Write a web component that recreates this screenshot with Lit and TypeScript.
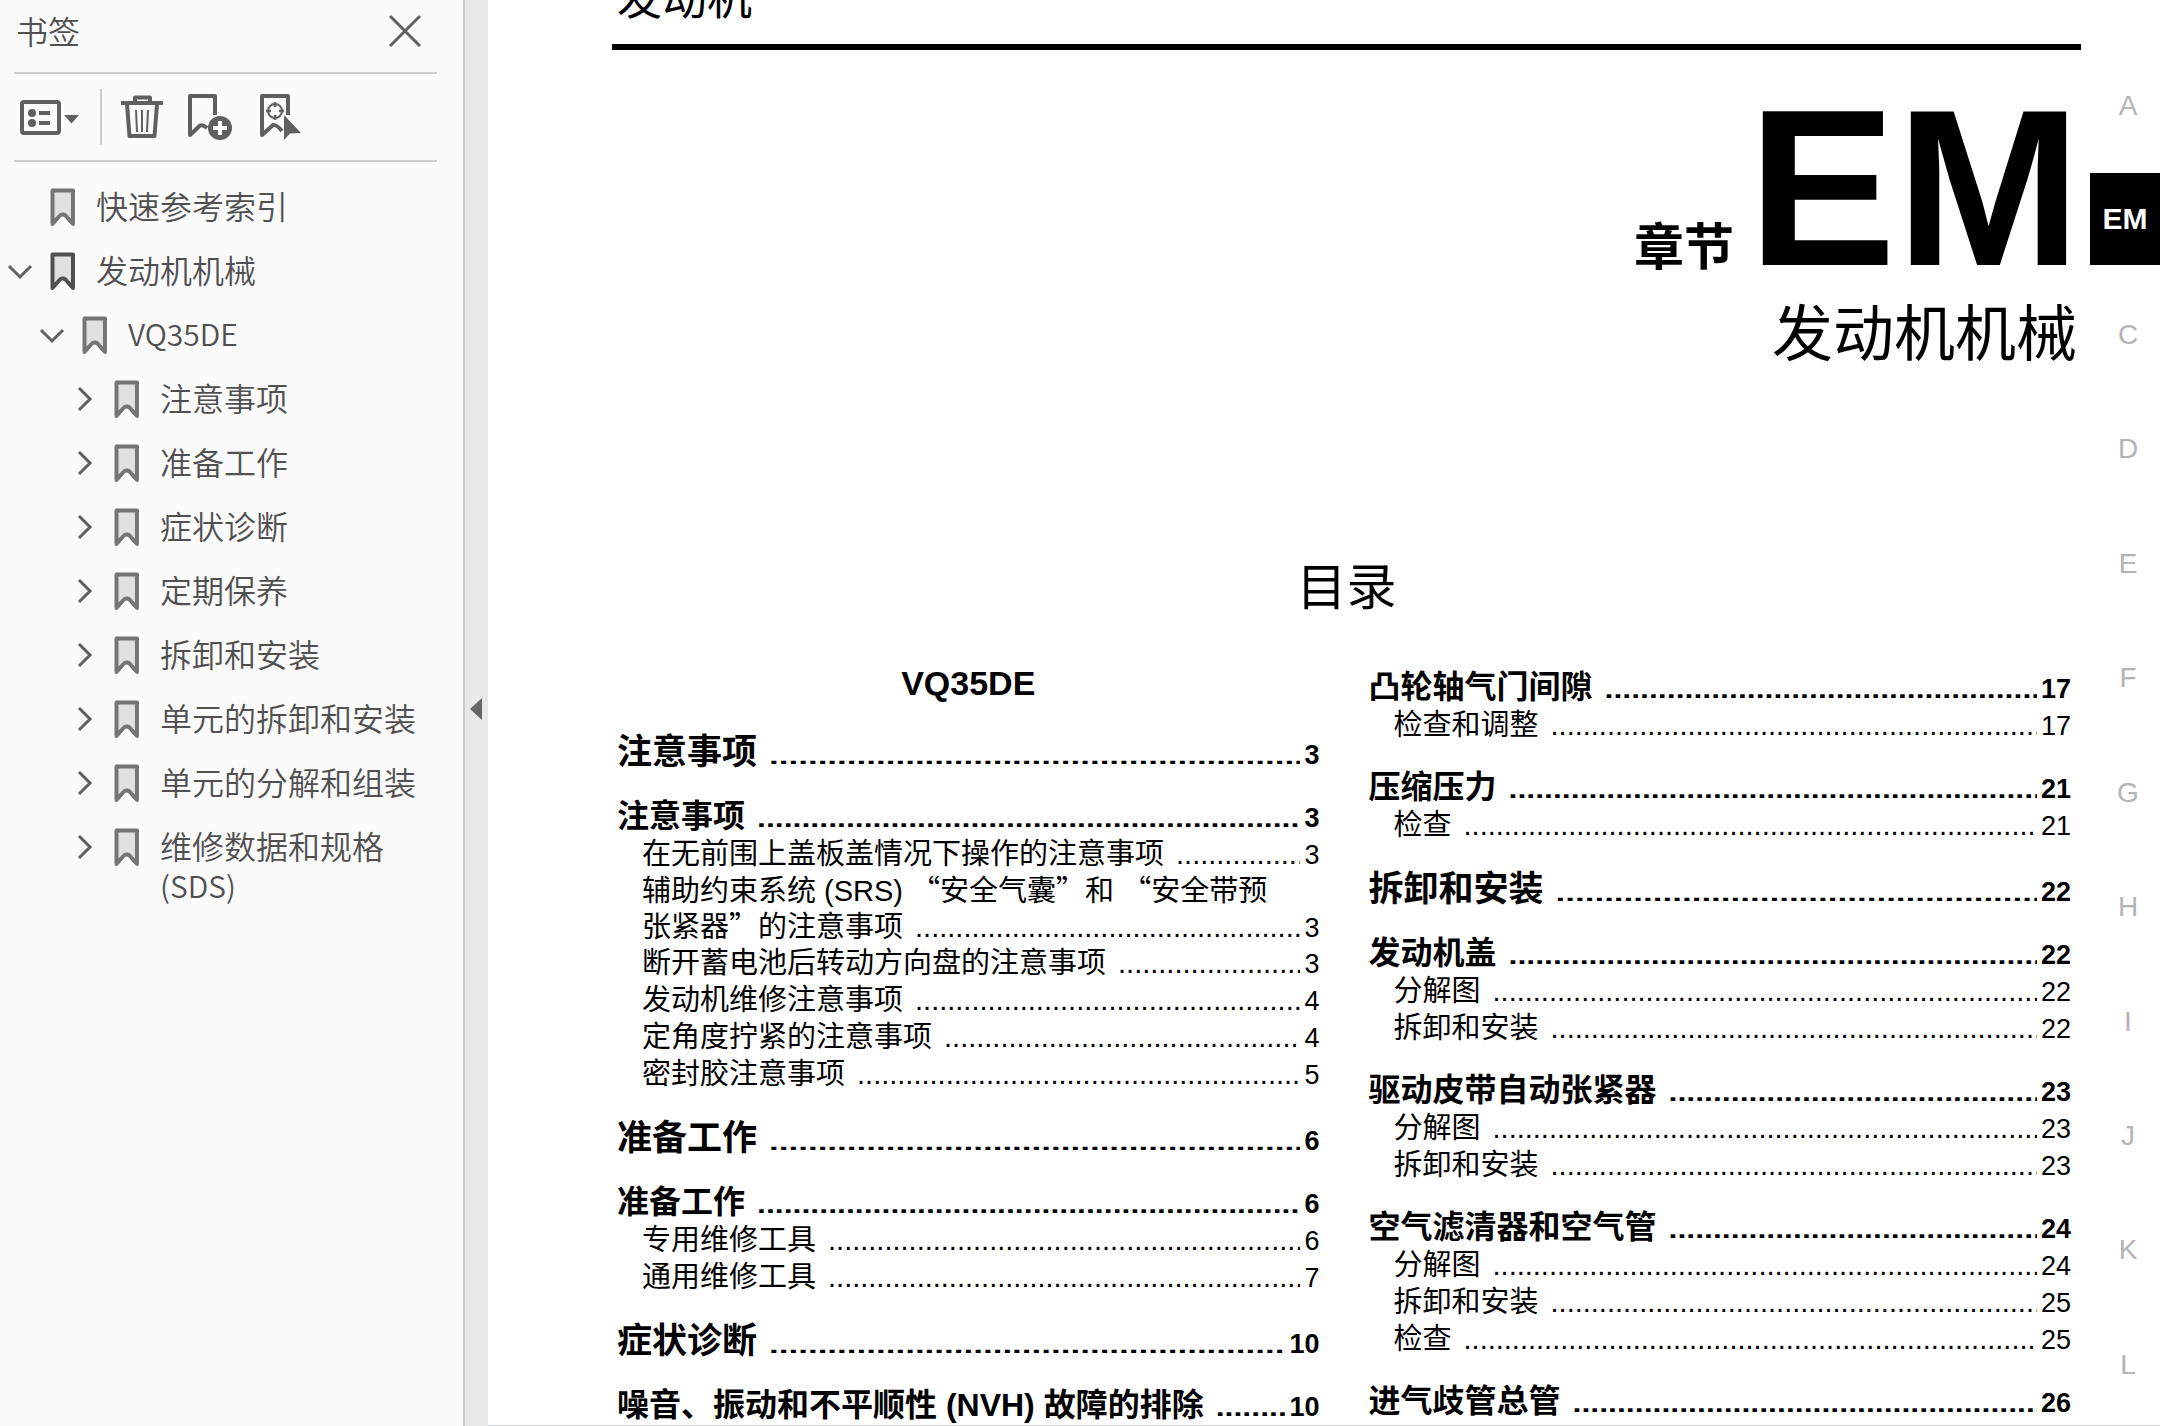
import { LitElement, html, css, nothing } from "lit";
import { customElement, property } from "lit/decorators.js";

interface Bookmark {
  label: string;
  latin?: boolean;
  note?: string;
  level: number;
  state: "open" | "closed" | "leaf";
  current?: boolean;
}

interface Entry {
  kind: "part" | "section" | "topic";
  lead?: string;
  title: string;
  page: string;
}

const BOOKMARKS: Bookmark[] = [
  { label: "快速参考索引", level: 0, state: "leaf" },
  { label: "发动机机械", level: 0, state: "open", current: true },
  { label: "VQ35DE", latin: true, level: 1, state: "open" },
  { label: "注意事项", level: 2, state: "closed" },
  { label: "准备工作", level: 2, state: "closed" },
  { label: "症状诊断", level: 2, state: "closed" },
  { label: "定期保养", level: 2, state: "closed" },
  { label: "拆卸和安装", level: 2, state: "closed" },
  { label: "单元的拆卸和安装", level: 2, state: "closed" },
  { label: "单元的分解和组装", level: 2, state: "closed" },
  { label: "维修数据和规格", note: "(SDS)", level: 2, state: "closed" },
];

const LEFT: Entry[] = [
  { kind: "part", title: "注意事项", page: "3" },
  { kind: "section", title: "注意事项", page: "3" },
  { kind: "topic", title: "在无前围上盖板盖情况下操作的注意事项", page: "3" },
  {
    kind: "topic",
    lead: "辅助约束系统 (SRS) “安全气囊”和 “安全带预",
    title: "张紧器”的注意事项",
    page: "3",
  },
  { kind: "topic", title: "断开蓄电池后转动方向盘的注意事项", page: "3" },
  { kind: "topic", title: "发动机维修注意事项", page: "4" },
  { kind: "topic", title: "定角度拧紧的注意事项", page: "4" },
  { kind: "topic", title: "密封胶注意事项", page: "5" },
  { kind: "part", title: "准备工作", page: "6" },
  { kind: "section", title: "准备工作", page: "6" },
  { kind: "topic", title: "专用维修工具", page: "6" },
  { kind: "topic", title: "通用维修工具", page: "7" },
  { kind: "part", title: "症状诊断", page: "10" },
  { kind: "section", title: "噪音、振动和不平顺性 (NVH) 故障的排除", page: "10" },
];

const RIGHT: Entry[] = [
  { kind: "section", title: "凸轮轴气门间隙", page: "17" },
  { kind: "topic", title: "检查和调整", page: "17" },
  { kind: "section", title: "压缩压力", page: "21" },
  { kind: "topic", title: "检查", page: "21" },
  { kind: "part", title: "拆卸和安装", page: "22" },
  { kind: "section", title: "发动机盖", page: "22" },
  { kind: "topic", title: "分解图", page: "22" },
  { kind: "topic", title: "拆卸和安装", page: "22" },
  { kind: "section", title: "驱动皮带自动张紧器", page: "23" },
  { kind: "topic", title: "分解图", page: "23" },
  { kind: "topic", title: "拆卸和安装", page: "23" },
  { kind: "section", title: "空气滤清器和空气管", page: "24" },
  { kind: "topic", title: "分解图", page: "24" },
  { kind: "topic", title: "拆卸和安装", page: "25" },
  { kind: "topic", title: "检查", page: "25" },
  { kind: "section", title: "进气歧管总管", page: "26" },
];

const TABS = ["A", "EM", "C", "D", "E", "F", "G", "H", "I", "J", "K", "L"];

@customElement("bookmark-panel")
export class BookmarkPanel extends LitElement {
  static styles = css`
    :host {
      display: flex;
      flex-direction: column;
      box-sizing: border-box;
      background: #fbfbfb;
      color: #505050;
      font: 32px/40px "Noto Sans CJK SC", sans-serif;
      font-weight: 350;
    }
    button {
      display: flex;
      align-items: center;
      justify-content: center;
      padding: 0;
      border: 0;
      background: none;
      color: #606060;
      font: inherit;
    }
    svg {
      display: block;
      fill: none;
      stroke: currentColor;
    }
    .head,
    .tools {
      display: flex;
      align-items: center;
      box-sizing: border-box;
      margin: 0 26px 0 14px;
      border-bottom: 2px solid #cdcdcd;
    }
    .head {
      height: 74px;
      justify-content: space-between;
      padding: 0 16px 12px 2px;
    }
    .title {
      margin: 0;
      font: inherit;
    }
    .tools {
      height: 88px;
      padding-left: 5px;
    }
    .divider {
      width: 2px;
      height: 56px;
      margin: 0 19px 0 21px;
      background: #cdcdcd;
    }
    .tool {
      margin-right: 24px;
    }
    .tree {
      margin: 0;
      padding: 13px 0 0;
      list-style: none;
    }
    .node {
      display: grid;
      grid-template-columns: 40px 26px 1fr;
      column-gap: 10px;
      align-items: start;
      padding: 12px 0;
    }
    .level-1 {
      padding-left: 32px;
    }
    .level-2 {
      padding-left: 64px;
    }
    .toggle {
      width: 40px;
      height: 40px;
    }
    .mark {
      color: #757575;
    }
    .current {
      color: #505050;
    }
    .label {
      margin-top: -2px;
      padding-left: 10px;
      color: inherit;
      text-decoration: none;
    }
    .latin {
      display: block;
      font-size: 30px;
    }
  `;

  private chevron(state: Bookmark["state"]) {
    const d = state === "open" ? "M9 15 20 26 31 15" : "M15 9 26 20 15 31";
    return html`<svg width="40" height="40" viewBox="0 0 40 40" stroke-width="3"><path d=${d} /></svg>`;
  }

  private node(b: Bookmark) {
    return html`<li class="node level-${b.level}">
      ${b.state === "leaf"
        ? html`<span></span>`
        : html`<button class="toggle" aria-expanded=${b.state === "open"} aria-label=${b.label}>
            ${this.chevron(b.state)}
          </button>`}
      <svg class="mark ${b.current ? "current" : ""}" width="26" height="40" viewBox="0 0 26 40" stroke-width="4" stroke-linejoin="round">
        <path fill="#e0e0e0" d="M2.5 3.5H23V37l-7.500-8.500q-2.800-2-5.500 0L2.500 37z" />
      </svg>
      <a class="label" href="#">
        ${b.latin ? html`<span class="latin">${b.label}</span>` : b.label}
        ${b.note ? html`<span class="latin">${b.note}</span>` : nothing}
      </a>
    </li>`;
  }

  render() {
    return html`
      <header class="head">
        <h2 class="title">书签</h2>
        <button aria-label="关闭">
          <svg width="32" height="34" viewBox="0 0 32 34" stroke-width="3">
            <path d="M1 3 31 33M31 3 1 33" />
          </svg>
        </button>
      </header>
      <div class="tools">
        <button aria-label="选项">
          <svg width="60" height="48" viewBox="0 0 60 48">
            <rect x="3" y="9" width="37" height="31" rx="2" stroke-width="4" />
            <g fill="currentColor" stroke="none">
              <circle cx="13" cy="20" r="4" />
              <circle cx="13" cy="30" r="4" />
              <path d="M20 18h11v4H20zM20 28h11v4H20zM45 22h15l-7.500 8.500z" />
            </g>
          </svg>
        </button>
        <span class="divider"></span>
        <button class="tool" aria-label="删除">
          <svg width="42" height="46" viewBox="0 0 42 46" stroke-width="4" stroke-linejoin="round">
            <path d="M0 9H42M14 8V3.500H29V8M6 10 8.500 42H33.500L36 10" />
            <path stroke-width="2" d="M15 16 16 38M21 16V38M27 16 26 38" />
          </svg>
        </button>
        <button class="tool" aria-label="新建书签">
          <svg width="48" height="48" viewBox="0 0 48 48" stroke-linejoin="round">
            <path stroke-width="4" d="M28 22V3H3V42L13 32.500Q16 31.500 20 35" />
            <circle cx="33" cy="35" r="12" fill="currentColor" stroke="none" />
            <path stroke="#fff" stroke-width="4" d="M26 35H40M33 28V42" />
          </svg>
        </button>
        <button class="tool" aria-label="定位当前书签">
          <svg width="42" height="48" viewBox="0 0 42 48" stroke-linejoin="round">
            <path stroke-width="4" d="M29 22V3H3V42L14 32Q17 31 23 38" />
            <circle cx="16" cy="18" r="7" stroke-width="2" />
            <path stroke-width="2.500" d="M16 9V14M16 22V27M7 18H12M20 18H25" />
            <path fill="currentColor" stroke="none" d="M25 22V47L31 40.500 42 40z" />
          </svg>
        </button>
      </div>
      <ul class="tree">
        ${BOOKMARKS.map((b) => this.node(b))}
      </ul>
    `;
  }
}

@customElement("toc-column")
export class TocColumn extends LitElement {
  @property({ attribute: false }) entries: Entry[] = [];

  static styles = css`
    :host {
      display: block;
      min-width: 0;
    }
    .list {
      margin: 0;
      padding: 0;
      list-style: none;
    }
    .topic {
      padding-left: 25px;
      font-size: 29px;
      line-height: 37px;
    }
    .section,
    .part {
      font-weight: 700;
    }
    .section {
      margin-top: 23px;
      font-size: 32px;
      line-height: 40px;
    }
    .part {
      margin-top: 24px;
      font-size: 35px;
      line-height: 42px;
    }
    .section:first-child,
    .part:first-child {
      margin-top: 0;
    }
    .lead {
      display: block;
      white-space: nowrap;
    }
    .row {
      display: flex;
      align-items: baseline;
    }
    .lead + .row {
      line-height: 35px;
    }
    .link {
      display: block;
      color: inherit;
      text-decoration: none;
    }
    .name {
      flex: none;
    }
    .quote {
      font-family: "Noto Sans CJK SC", sans-serif;
      line-height: 1;
    }
    .dots {
      flex: 1;
      min-width: 0;
      margin: 0 4px 0 12px;
      overflow: hidden;
      line-height: 20px;
      white-space: nowrap;
    }
    .dots::before {
      content: "..........................................................................................";
    }
    .page {
      flex: none;
      font-size: 27px;
      line-height: 20px;
    }
  `;

  /* Curly quotes take the full-width forms of the Chinese face. */
  private text(s: string) {
    return s
      .split(/([“”])/)
      .map((part) => (/[“”]/.test(part) ? html`<span class="quote">${part}</span>` : part));
  }

  render() {
    return html`<ol class="list">
      ${this.entries.map(
        (e) => html`<li class=${e.kind}>
          <a class="link" href="#">
            ${e.lead ? html`<span class="lead">${this.text(e.lead)}</span>` : nothing}
            <span class="row">
              <span class="name">${this.text(e.title)}</span>
              <span class="dots" aria-hidden="true"></span>
              <span class="page">${e.page}</span>
            </span>
          </a>
        </li>`,
      )}
    </ol>`;
  }
}

@customElement("app-root")
export class AppRoot extends LitElement {
  static styles = css`
    :host {
      display: grid;
      grid-template-columns: 463px 25px minmax(0, 1fr);
      height: 100vh;
      overflow: hidden;
      background: #fff;
      color: #000;
      font-family: "Liberation Sans", "Noto Sans CJK SC", sans-serif;
    }
    .splitter {
      display: flex;
      align-items: center;
      justify-content: flex-end;
      padding: 0 6px 9px 0;
      border: 0;
      border-left: 2px solid #cbcbcb;
      background: #e9e9e9;
    }
    .viewer {
      display: flex;
      min-width: 0;
      min-height: 0;
      overflow: hidden;
      border-bottom: 1px solid #c6ced6;
    }
    .sheet {
      flex: 1;
      min-width: 0;
      margin-top: -30px;
      padding: 0 9px 0 124px;
    }
    .running {
      padding: 0 5px 14px;
      border-bottom: 6px solid #000;
      font-size: 45px;
      line-height: 60px;
    }
    .chapter {
      display: flex;
      align-items: baseline;
      justify-content: flex-end;
      gap: 14px;
      margin: 0;
      padding: 28px 0 0;
    }
    .word {
      font-size: 50px;
      font-weight: 700;
      line-height: 60px;
    }
    .code {
      font-size: 222px;
      font-weight: 700;
      line-height: 220px;
    }
    .subject {
      margin: 0 4px 0 0;
      font-size: 61px;
      font-weight: 400;
      line-height: 74px;
      text-align: right;
    }
    .contents {
      margin: 0;
      padding: 184px 0 43px;
      font-size: 50px;
      font-weight: 400;
      line-height: 64px;
      text-align: center;
    }
    .columns {
      display: grid;
      grid-template-columns: repeat(2, minmax(0, 1fr));
      gap: 49px;
      padding: 0 10px 0 5px;
    }
    .engine {
      margin: 0 0 28px;
      font-size: 34px;
      line-height: 40px;
      text-align: center;
    }
    .right {
      padding-top: 4px;
    }
    .rail {
      display: flex;
      flex-direction: column;
      width: 70px;
      margin: 0;
      padding: 47px 0 5px;
      list-style: none;
    }
    .tab {
      display: flex;
      flex: 1;
      align-items: center;
    }
    .tab-link {
      flex: 1;
      padding: 4px 0 0 6px;
      color: #b4b4b4;
      font-size: 28px;
      text-align: center;
      text-decoration: none;
    }
    .active {
      padding: 0;
      background: #000;
      color: #fff;
      font-size: 30px;
      font-weight: 700;
      line-height: 92px;
    }
  `;

  render() {
    return html`
      <bookmark-panel></bookmark-panel>
      <button class="splitter" aria-label="折叠面板">
        <svg width="12" height="22" viewBox="0 0 12 22"><path fill="#666" d="M12 0V22L0 11z" /></svg>
      </button>
      <main class="viewer">
        <article class="sheet">
          <div class="running">发动机</div>
          <h1 class="chapter"><span class="word">章节</span><span class="code">EM</span></h1>
          <h2 class="subject">发动机机械</h2>
          <h2 class="contents">目录</h2>
          <div class="columns">
            <section>
              <h3 class="engine">VQ35DE</h3>
              <toc-column .entries=${LEFT}></toc-column>
            </section>
            <toc-column class="right" .entries=${RIGHT}></toc-column>
          </div>
        </article>
        <ul class="rail">
          ${TABS.map(
            (t) => html`<li class="tab">
              <a class="tab-link ${t === "EM" ? "active" : ""}" href="#">${t}</a>
            </li>`,
          )}
        </ul>
      </main>
    `;
  }
}
